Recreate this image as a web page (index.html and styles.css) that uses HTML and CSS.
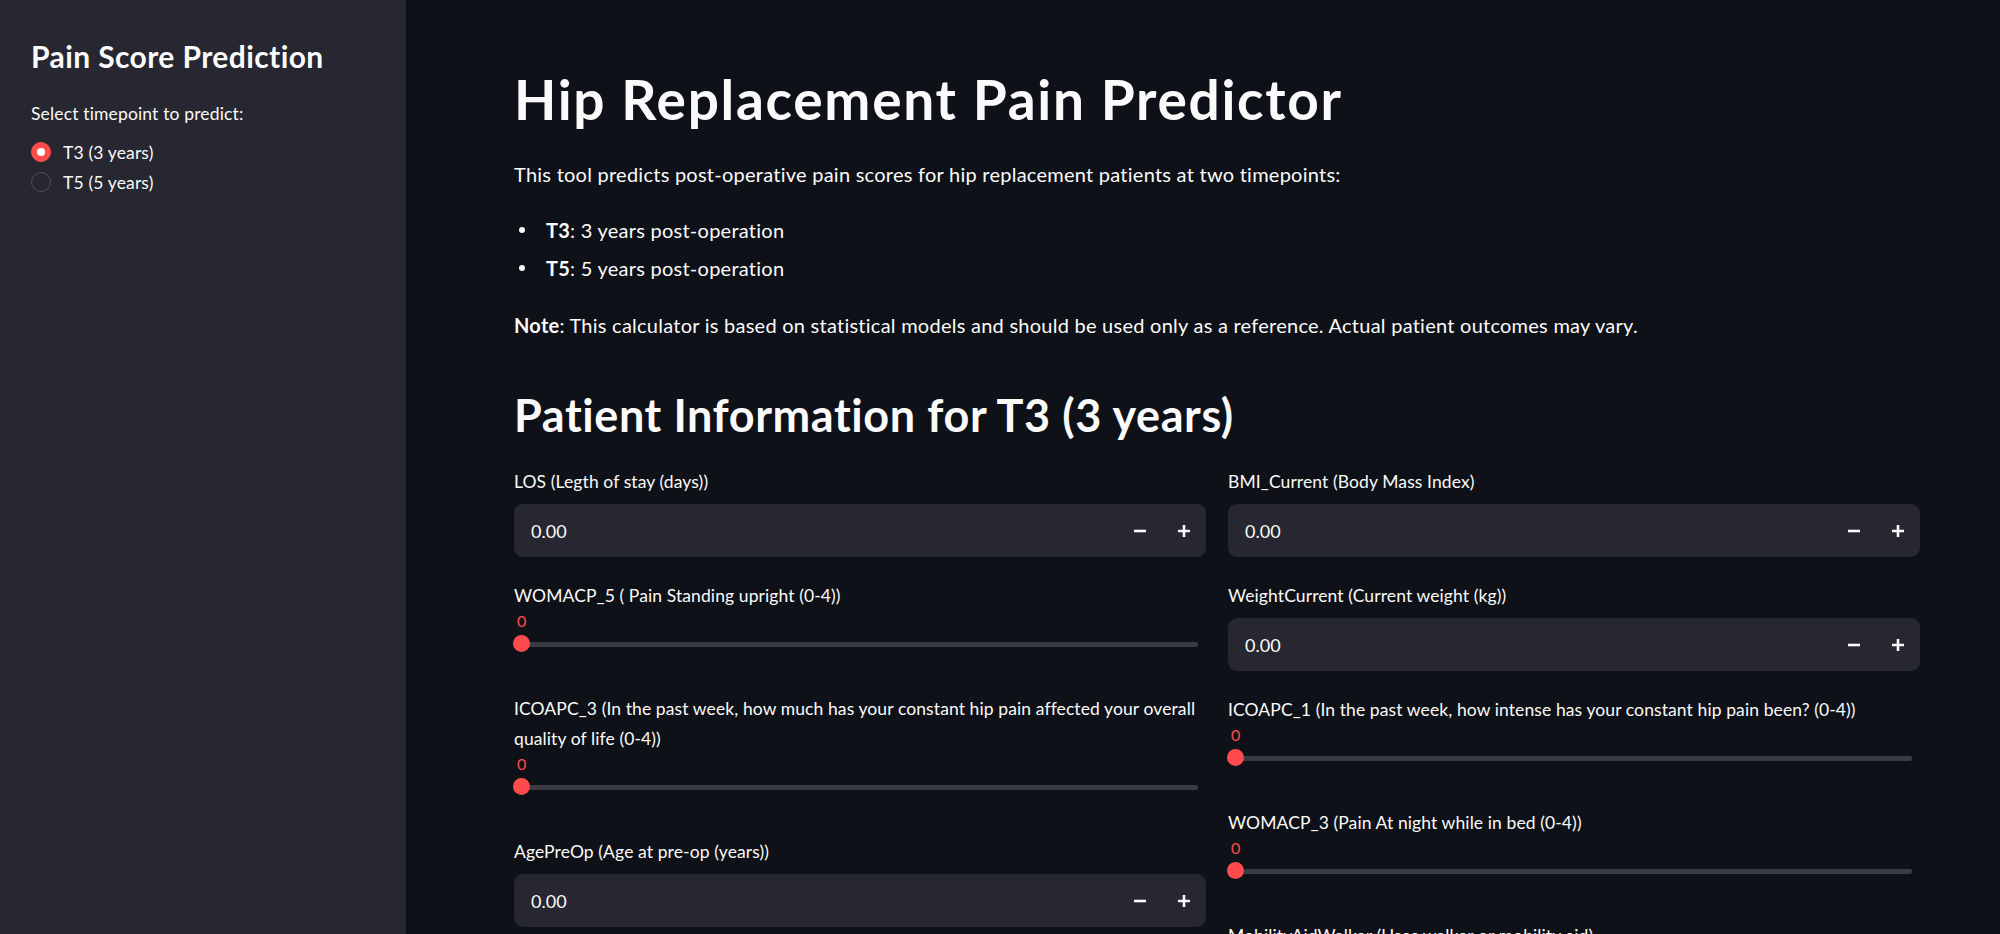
FILE: index.html
```html
<!DOCTYPE html>
<html lang="en">
<head>
    <meta charset="UTF-8">
    <meta name="viewport" content="width=device-width, initial-scale=1.0">
    <title>Hip Replacement Pain Predictor</title>
    <link rel="stylesheet" href="styles.css">
</head>
<body>
    <div class="app">
        <!-- Sidebar with timepoint choice -->
        <aside class="sidebar">
            <h2 class="side-title">Pain Score Prediction</h2>
            <div class="radio-label">Select timepoint to predict:</div>
            <label class="radio checked"><span class="radio-dot"></span>T3 (3 years)</label>
            <label class="radio"><span class="radio-dot"></span>T5 (5 years)</label>
        </aside>

        <main class="main">
            <h1>Hip Replacement Pain Predictor</h1>
            <p class="intro">This tool predicts post-operative pain scores for hip replacement patients at two timepoints:</p>
            <ul class="points">
                <li><strong>T3</strong>: 3 years post-operation</li>
                <li><strong>T5</strong>: 5 years post-operation</li>
            </ul>
            <p class="note"><strong>Note</strong>: This calculator is based on statistical models and should be used only as a reference. Actual patient outcomes may vary.</p>

            <h2>Patient Information for T3 (3 years)</h2>

            <div class="columns">
                <div class="col">
                    <div class="field">
                        <div class="label">LOS (Legth of stay (days))</div>
                        <div class="number-input">
                            <span class="value">0.00</span>
                            <span class="step"><svg width="14" height="14" viewBox="0 0 14 14"><path d="M1 7h12" stroke="#fafafa" stroke-width="2.6"/></svg></span>
                            <span class="step"><svg width="14" height="14" viewBox="0 0 14 14"><path d="M1 7h12M7 1v12" stroke="#fafafa" stroke-width="2.6"/></svg></span>
                        </div>
                    </div>
                    <div class="field">
                        <div class="label">WOMACP_5 ( Pain Standing upright (0-4))</div>
                        <div class="slider">
                            <div class="slider-value">0</div>
                            <div class="slider-rail"><div class="track"></div><span class="thumb"></span></div>
                        </div>
                    </div>
                    <div class="field">
                        <div class="label">ICOAPC_3 (In the past week, how much has your constant hip pain affected your overall quality of life (0-4))</div>
                        <div class="slider">
                            <div class="slider-value">0</div>
                            <div class="slider-rail"><div class="track"></div><span class="thumb"></span></div>
                        </div>
                    </div>
                    <div class="field">
                        <div class="label">AgePreOp (Age at pre-op (years))</div>
                        <div class="number-input">
                            <span class="value">0.00</span>
                            <span class="step"><svg width="14" height="14" viewBox="0 0 14 14"><path d="M1 7h12" stroke="#fafafa" stroke-width="2.6"/></svg></span>
                            <span class="step"><svg width="14" height="14" viewBox="0 0 14 14"><path d="M1 7h12M7 1v12" stroke="#fafafa" stroke-width="2.6"/></svg></span>
                        </div>
                    </div>
                </div>

                <div class="col">
                    <div class="field">
                        <div class="label">BMI_Current (Body Mass Index)</div>
                        <div class="number-input">
                            <span class="value">0.00</span>
                            <span class="step"><svg width="14" height="14" viewBox="0 0 14 14"><path d="M1 7h12" stroke="#fafafa" stroke-width="2.6"/></svg></span>
                            <span class="step"><svg width="14" height="14" viewBox="0 0 14 14"><path d="M1 7h12M7 1v12" stroke="#fafafa" stroke-width="2.6"/></svg></span>
                        </div>
                    </div>
                    <div class="field">
                        <div class="label">WeightCurrent (Current weight (kg))</div>
                        <div class="number-input">
                            <span class="value">0.00</span>
                            <span class="step"><svg width="14" height="14" viewBox="0 0 14 14"><path d="M1 7h12" stroke="#fafafa" stroke-width="2.6"/></svg></span>
                            <span class="step"><svg width="14" height="14" viewBox="0 0 14 14"><path d="M1 7h12M7 1v12" stroke="#fafafa" stroke-width="2.6"/></svg></span>
                        </div>
                    </div>
                    <div class="field">
                        <div class="label">ICOAPC_1 (In the past week, how intense has your constant hip pain been? (0-4))</div>
                        <div class="slider">
                            <div class="slider-value">0</div>
                            <div class="slider-rail"><div class="track"></div><span class="thumb"></span></div>
                        </div>
                    </div>
                    <div class="field">
                        <div class="label">WOMACP_3 (Pain At night while in bed (0-4))</div>
                        <div class="slider">
                            <div class="slider-value">0</div>
                            <div class="slider-rail"><div class="track"></div><span class="thumb"></span></div>
                        </div>
                    </div>
                    <div class="field">
                        <div class="label">MobilityAidWalker (Uses walker or mobility aid)</div>
                    </div>
                </div>
            </div>
        </main>
    </div>
</body>
</html>
```

FILE: styles.css
```css
* {
    box-sizing: border-box;
}
html, body {
    margin: 0;
    padding: 0;
}
body {
    font-family: 'Lato', 'Open Sans', sans-serif;
    background: #0e1117; /* Streamlit dark background */
    color: #fafafa;
    overflow: hidden;
}
.app {
    display: flex;
    height: 934px;
}
.sidebar {
    width: 406px;
    flex-shrink: 0;
    background: #262730;
    padding: 38px 31px 0;
}
.side-title {
    font-size: 30px;
    line-height: 36px;
    font-weight: 700;
    letter-spacing: 0.4px;
    margin: 0 0 26px;
}
.radio-label {
    font-size: 17.5px;
    line-height: 28px;
    letter-spacing: 0.15px;
    margin-bottom: 9px;
}
.radio {
    display: flex;
    align-items: center;
    gap: 12px;
    height: 30px;
    font-size: 17.5px;
    letter-spacing: 0.15px;
}
.radio-dot {
    width: 20px;
    height: 20px;
    border-radius: 50%;
    border: 1px solid #4e4f58;
    display: flex;
    align-items: center;
    justify-content: center;
}
.radio.checked .radio-dot {
    background: #ff4b4b;
    border-color: #ff4b4b;
}
.radio.checked .radio-dot::after {
    content: '';
    width: 8px;
    height: 8px;
    border-radius: 50%;
    background: #ffffff;
}
.main {
    flex: 1;
    padding: 66px 80px 0 108px;
}
h1 {
    font-size: 55px;
    line-height: 66px;
    font-weight: 700;
    letter-spacing: 1.7px;
    margin: 0 0 26px;
}
.intro, .note {
    font-size: 20px;
    line-height: 32px;
    letter-spacing: 0.25px;
    margin: 0;
}
.points {
    list-style: none;
    margin: 24px 0 25px;
    padding-left: 32px;
    font-size: 20px;
    line-height: 32px;
    letter-spacing: 0.25px;
}
.points li {
    position: relative;
}
.points li::before {
    content: '';
    position: absolute;
    left: -27px;
    top: 13px;
    width: 6px;
    height: 6px;
    border-radius: 50%;
    background: #fafafa;
}
.points li + li {
    margin-top: 6px;
}
strong {
    font-weight: 700;
}
h2 {
    font-size: 45px;
    line-height: 54px;
    font-weight: 700;
    letter-spacing: 0.6px;
    margin: 47px 0 25px;
}
.columns {
    display: grid;
    grid-template-columns: 1fr 1fr;
    gap: 22px;
    align-items: start;
}
.col {
    display: flex;
    flex-direction: column;
    gap: 24px;
}
.label {
    font-size: 17.5px;
    line-height: 30px;
    letter-spacing: 0.1px;
}
.number-input {
    margin-top: 7px;
    height: 53px;
    background: #262730;
    border-radius: 9px;
    display: flex;
    align-items: center;
    padding-left: 17px;
}
.number-input .value {
    flex: 1;
    font-size: 18px;
}
.step {
    width: 44px;
    height: 100%;
    display: flex;
    align-items: center;
    justify-content: center;
}
.slider {
    height: 59px;
}
.slider-value {
    color: #ff4b4b;
    font-size: 16px;
    line-height: 20px;
    padding-left: 3px;
}
.slider-rail {
    position: relative;
    height: 26px;
    display: flex;
    align-items: center;
}
.track {
    flex: 1;
    height: 5px;
    margin: 0 8px 0 6px;
    background: #3a3b42;
    border-radius: 2px;
}
.thumb {
    position: absolute;
    left: -1px;
    top: 4px;
    width: 17px;
    height: 17px;
    border-radius: 50%;
    background: #ff4b4b;
}
```
